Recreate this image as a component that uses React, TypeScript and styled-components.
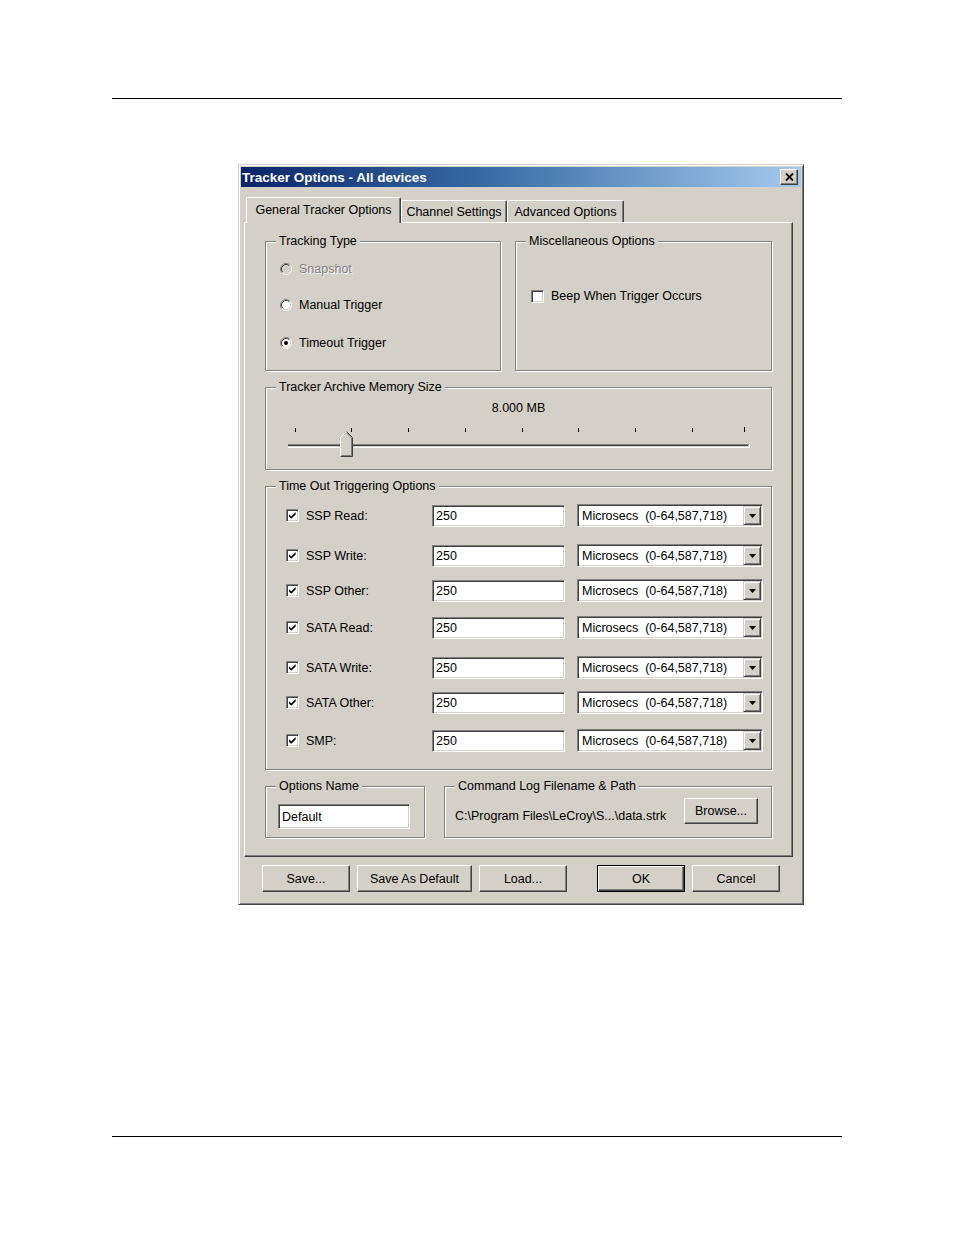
import React from 'react';
import styled, { createGlobalStyle } from 'styled-components';

const FACE = '#d4d0c8';
const SHADOW = '#808080';
const DARK = '#404040';

const GlobalStyle = createGlobalStyle`
  html, body {
    margin: 0;
    padding: 0;
    background: #fff;
  }
  body {
    font-family: "Liberation Sans", Arial, sans-serif;
    font-size: 12.5px;
    color: #000;
  }
`;

const Page = styled.div`
  width: 954px;
  height: 1235px;
  overflow: hidden;
  background: #fff;
`;

const Rule = styled.div<{ $top: number }>`
  margin: ${p => p.$top}px 0 0 112px;
  width: 730px;
  height: 1px;
  background: #000;
`;

const Window = styled.div`
  margin: 65px 0 0 238px;
  width: 566px;
  height: 741px;
  box-sizing: border-box;
  padding: 2px;
  background: ${FACE};
  border: 1px solid;
  border-color: ${FACE} ${DARK} ${DARK} ${FACE};
  box-shadow: inset 1px 1px 0 #fff, inset -1px -1px 0 ${SHADOW};
  display: flex;
  flex-direction: column;
`;

const TitleBar = styled.div`
  height: 20px;
  display: flex;
  align-items: center;
  justify-content: space-between;
  padding: 0 3px 0 1px;
  background: linear-gradient(to right, #0a246a 0%, #3a6ea5 45%, #a6caf0 100%);
  color: #fff;
  font-weight: bold;
  font-size: 13.5px;
`;

const CloseButton = styled.div`
  width: 18px;
  height: 16px;
  box-sizing: border-box;
  background: ${FACE};
  border: 1px solid;
  border-color: #fff ${DARK} ${DARK} #fff;
  box-shadow: inset -1px -1px 0 ${SHADOW};
  display: flex;
  align-items: center;
  justify-content: center;
`;

const TabArea = styled.div`
  margin: 10px 8px 0 3px;
  display: flex;
  flex-direction: column;
`;

const TabRow = styled.div`
  height: 25px;
  display: flex;
  align-items: flex-end;
  padding-left: 2px;
`;

const Tab = styled.div<{ $w: number; $active?: boolean }>`
  position: relative;
  z-index: ${p => (p.$active ? 1 : 0)};
  width: ${p => p.$w}px;
  height: ${p => (p.$active ? 26 : 22)}px;
  margin-bottom: ${p => (p.$active ? -1 : 0)}px;
  box-sizing: border-box;
  background: ${FACE};
  border-left: 1px solid #fff;
  border-top: 1px solid #fff;
  border-right: 1px solid ${DARK};
  border-radius: 2px 2px 0 0;
  box-shadow: inset -1px 0 0 ${SHADOW};
  display: flex;
  align-items: ${p => (p.$active ? 'flex-start' : 'center')};
  padding-top: ${p => (p.$active ? 5 : 1)}px;
  justify-content: center;
  white-space: nowrap;
`;

const Panel = styled.div`
  height: 635px;
  box-sizing: border-box;
  border: 1px solid;
  border-color: #fff ${DARK} ${DARK} #fff;
  box-shadow: inset -1px -1px 0 ${SHADOW};
  padding: 11px 20px 0 20px;
  display: flex;
  flex-direction: column;
  gap: 9px;
`;

const TwoCols = styled.div<{ $cols: string; $gap: number }>`
  display: grid;
  grid-template-columns: ${p => p.$cols};
  column-gap: ${p => p.$gap}px;
`;

const Group = styled.fieldset<{ $h: number }>`
  margin: 0;
  padding: 0;
  min-width: 0;
  height: ${p => p.$h}px;
  box-sizing: border-box;
  border: 1px solid ${SHADOW};
  box-shadow: inset 1px 1px 0 #fff, 1px 1px 0 #fff;
`;

const Legend = styled.legend`
  margin-left: 10px;
  padding: 0 3px;
  line-height: 14px;
  background: ${FACE};
  white-space: nowrap;
`;

const GroupBody = styled.div<{ $pad: string }>`
  padding: ${p => p.$pad};
`;

const RadioList = styled.div`
  display: grid;
  grid-template-rows: 36px 38px 16px;
`;

const OptionLine = styled.label<{ $disabled?: boolean }>`
  display: flex;
  align-items: center;
  gap: 7px;
  height: 16px;
  color: ${p => (p.$disabled ? SHADOW : '#000')};
  text-shadow: ${p => (p.$disabled ? '1px 1px 0 #fff' : 'none')};
  white-space: nowrap;
`;

const CheckBox = styled.span`
  width: 13px;
  height: 13px;
  flex: none;
  box-sizing: border-box;
  background: #fff;
  border: 1px solid;
  border-color: ${SHADOW} #fff #fff ${SHADOW};
  box-shadow: inset 1px 1px 0 ${DARK}, inset -1px -1px 0 ${FACE};
  display: flex;
  align-items: center;
  justify-content: center;
`;

const MemValue = styled.div`
  text-align: center;
  line-height: 14px;
  padding-top: 7px;
`;

const SliderArt = styled.svg`
  display: block;
  margin: 11px 0 0 18px;
`;

const Row = styled.div<{ $mt: number }>`
  display: flex;
  align-items: center;
  height: 23px;
  margin-top: ${p => p.$mt}px;
`;

const RowLabel = styled.span`
  width: 126px;
  margin-left: 7px;
  white-space: nowrap;
`;

const TextBox = styled.div<{ $w: number; $h: number }>`
  width: ${p => p.$w}px;
  height: ${p => p.$h}px;
  box-sizing: border-box;
  background: #fff;
  border: 1px solid;
  border-color: ${SHADOW} #fff #fff ${SHADOW};
  box-shadow: inset 1px 1px 0 ${DARK}, inset -1px -1px 0 ${FACE};
  padding: 1px 3px 0 3px;
  display: flex;
  align-items: center;
  white-space: nowrap;
`;

const Select = styled.div`
  width: 186px;
  height: 23px;
  margin-left: 12px;
  box-sizing: border-box;
  background: #fff;
  border: 1px solid;
  border-color: ${SHADOW} #fff #fff ${SHADOW};
  box-shadow: inset 1px 1px 0 ${DARK}, inset -1px -1px 0 ${FACE};
  padding: 1px 1px 1px 2px;
  display: flex;
  align-items: center;
`;

const SelectText = styled.span`
  flex: 1;
  padding-left: 2px;
  white-space: pre;
`;

const SelectButton = styled.span`
  width: 18px;
  height: 19px;
  box-sizing: border-box;
  background: ${FACE};
  border: 1px solid;
  border-color: ${FACE} ${DARK} ${DARK} ${FACE};
  box-shadow: inset 1px 1px 0 #fff, inset -1px -1px 0 ${SHADOW};
  display: flex;
  align-items: center;
  justify-content: center;
`;

const PathLine = styled.div`
  display: flex;
  align-items: flex-start;
  justify-content: space-between;
  white-space: nowrap;
`;

const PathText = styled.span`
  padding-top: 11px;
`;

const ButtonRow = styled.div`
  display: flex;
  gap: 7px;
  margin-top: 8px;
  padding-left: 21px;
`;

const Button = styled.div<{ $w: number; $h?: number; $default?: boolean; $gapBefore?: number }>`
  width: ${p => p.$w}px;
  height: ${p => p.$h ?? 27}px;
  margin-left: ${p => p.$gapBefore ?? 0}px;
  box-sizing: border-box;
  background: ${FACE};
  border: 1px solid;
  border-color: ${p => (p.$default ? '#000' : `#fff ${DARK} ${DARK} #fff`)};
  box-shadow: ${p =>
    p.$default
      ? `inset 1px 1px 0 #fff, inset -1px -1px 0 ${DARK}, inset -2px -2px 0 ${SHADOW}`
      : `inset -1px -1px 0 ${SHADOW}`};
  display: flex;
  align-items: center;
  justify-content: center;
  white-space: nowrap;
`;

function CloseGlyph() {
  return (
    <svg width="9" height="8" viewBox="0 0 9 8">
      <path d="M1 0.5 L8 7.5 M8 0.5 L1 7.5" stroke="#000" strokeWidth="1.8" />
    </svg>
  );
}

function Check() {
  return (
    <svg width="9" height="9" viewBox="0 0 9 9">
      <path d="M1 3.2 L3.2 5.4 L7.6 1 V3.4 L3.2 7.8 L1 5.6 Z" fill="#000" />
    </svg>
  );
}

function Radio({ checked, disabled }: { checked?: boolean; disabled?: boolean }) {
  return (
    <svg width="12" height="12" viewBox="0 0 12 12" style={{ flex: 'none' }}>
      <circle cx="6" cy="6" r="5" fill={disabled ? FACE : '#fff'} />
      <path d="M2.11 9.89 A5.5 5.5 0 0 1 9.89 2.11" fill="none" stroke={SHADOW} strokeWidth="1" />
      <path d="M2.82 9.18 A4.5 4.5 0 0 1 9.18 2.82" fill="none" stroke={DARK} strokeWidth="1" />
      <path d="M9.89 2.11 A5.5 5.5 0 0 1 2.11 9.89" fill="none" stroke="#fff" strokeWidth="1" />
      <path d="M9.18 2.82 A4.5 4.5 0 0 1 2.82 9.18" fill="none" stroke={FACE} strokeWidth="1" />
      {checked && <circle cx="6" cy="6" r="2" fill="#000" />}
    </svg>
  );
}

function Arrow() {
  return (
    <svg width="7" height="4" viewBox="0 0 7 4">
      <path d="M0 0 H7 L3.5 4 Z" fill="#000" />
    </svg>
  );
}

const ticks = [11, 67, 124, 181, 238, 294, 351, 408, 460];

function Slider() {
  return (
    <SliderArt width="470" height="32" viewBox="0 0 470 32">
      {ticks.map((x, i) => (
        <rect key={x} x={x} y={i === ticks.length - 1 ? 1 : 2} width="1" height={i === ticks.length - 1 ? 5 : 4} fill="#000" />
      ))}
      <rect x="4" y="18" width="461" height="1" fill={SHADOW} />
      <rect x="4" y="19" width="460" height="1" fill={DARK} />
      <rect x="4" y="20" width="461" height="1" fill={FACE} />
      <rect x="4" y="21" width="462" height="1" fill="#fff" />
      <rect x="465" y="18" width="1" height="4" fill="#fff" />
      <path d="M56.5 30.5 V11.5 L62.5 5.5 L68.5 11.5 V30.5 Z" fill={FACE} />
      <path d="M56.5 30.5 V11.5 L62.5 5.5" fill="none" stroke="#fff" />
      <path d="M62.5 5.5 L68.5 11.5 V30.5 H56.5" fill="none" stroke={DARK} />
      <path d="M62.5 7 L67.5 12 V29.5 H57.5" fill="none" stroke={SHADOW} />
    </SliderArt>
  );
}

const timeoutRows = [
  { label: 'SSP Read:', mt: 0 },
  { label: 'SSP Write:', mt: 17 },
  { label: 'SSP Other:', mt: 12 },
  { label: 'SATA Read:', mt: 14 },
  { label: 'SATA Write:', mt: 17 },
  { label: 'SATA Other:', mt: 12 },
  { label: 'SMP:', mt: 15 },
];

export default function App() {
  return (
    <Page>
      <GlobalStyle />
      <Rule $top={98} />
      <Window>
        <TitleBar>
          <span>Tracker Options - All devices</span>
          <CloseButton>
            <CloseGlyph />
          </CloseButton>
        </TitleBar>

        <TabArea>
          <TabRow>
            <Tab $w={155} $active>General Tracker Options</Tab>
            <Tab $w={106}>Channel Settings</Tab>
            <Tab $w={117}>Advanced Options</Tab>
          </TabRow>

          <Panel>
            <TwoCols $cols="236px 1fr" $gap={14}>
              <Group $h={137}>
                <Legend>Tracking Type</Legend>
                <GroupBody $pad="13px 0 0 14px">
                  <RadioList>
                    <OptionLine $disabled>
                      <Radio disabled />
                      Snapshot
                    </OptionLine>
                    <OptionLine>
                      <Radio />
                      Manual Trigger
                    </OptionLine>
                    <OptionLine>
                      <Radio checked />
                      Timeout Trigger
                    </OptionLine>
                  </RadioList>
                </GroupBody>
              </Group>
              <Group $h={137}>
                <Legend>Miscellaneous Options</Legend>
                <GroupBody $pad="40px 0 0 15px">
                  <OptionLine>
                    <CheckBox />
                    Beep When Trigger Occurs
                  </OptionLine>
                </GroupBody>
              </Group>
            </TwoCols>

            <Group $h={90}>
              <Legend>Tracker Archive Memory Size</Legend>
              <MemValue>8.000 MB</MemValue>
              <Slider />
            </Group>

            <Group $h={291}>
              <Legend>Time Out Triggering Options</Legend>
              <GroupBody $pad="11px 0 0 20px">
                {timeoutRows.map(r => (
                  <Row key={r.label} $mt={r.mt}>
                    <CheckBox>
                      <Check />
                    </CheckBox>
                    <RowLabel>{r.label}</RowLabel>
                    <TextBox $w={133} $h={22}>250</TextBox>
                    <Select>
                      <SelectText>{'Microsecs  (0-64,587,718)'}</SelectText>
                      <SelectButton>
                        <Arrow />
                      </SelectButton>
                    </Select>
                  </Row>
                ))}
              </GroupBody>
            </Group>

            <TwoCols $cols="160px 1fr" $gap={19}>
              <Group $h={59}>
                <Legend>Options Name</Legend>
                <GroupBody $pad="11px 0 0 12px">
                  <TextBox $w={132} $h={25}>Default</TextBox>
                </GroupBody>
              </Group>
              <Group $h={59}>
                <Legend>Command Log Filename &amp; Path</Legend>
                <GroupBody $pad="5px 13px 0 10px">
                  <PathLine>
                    <PathText>{'C:\\Program Files\\LeCroy\\S...\\data.strk'}</PathText>
                    <Button $w={74} $h={26}>Browse...</Button>
                  </PathLine>
                </GroupBody>
              </Group>
            </TwoCols>
          </Panel>
        </TabArea>

        <ButtonRow>
          <Button $w={88}>Save...</Button>
          <Button $w={115}>Save As Default</Button>
          <Button $w={88}>Load...</Button>
          <Button $w={88} $default $gapBefore={23}>OK</Button>
          <Button $w={88}>Cancel</Button>
        </ButtonRow>
      </Window>
      <Rule $top={231} />
    </Page>
  );
}
